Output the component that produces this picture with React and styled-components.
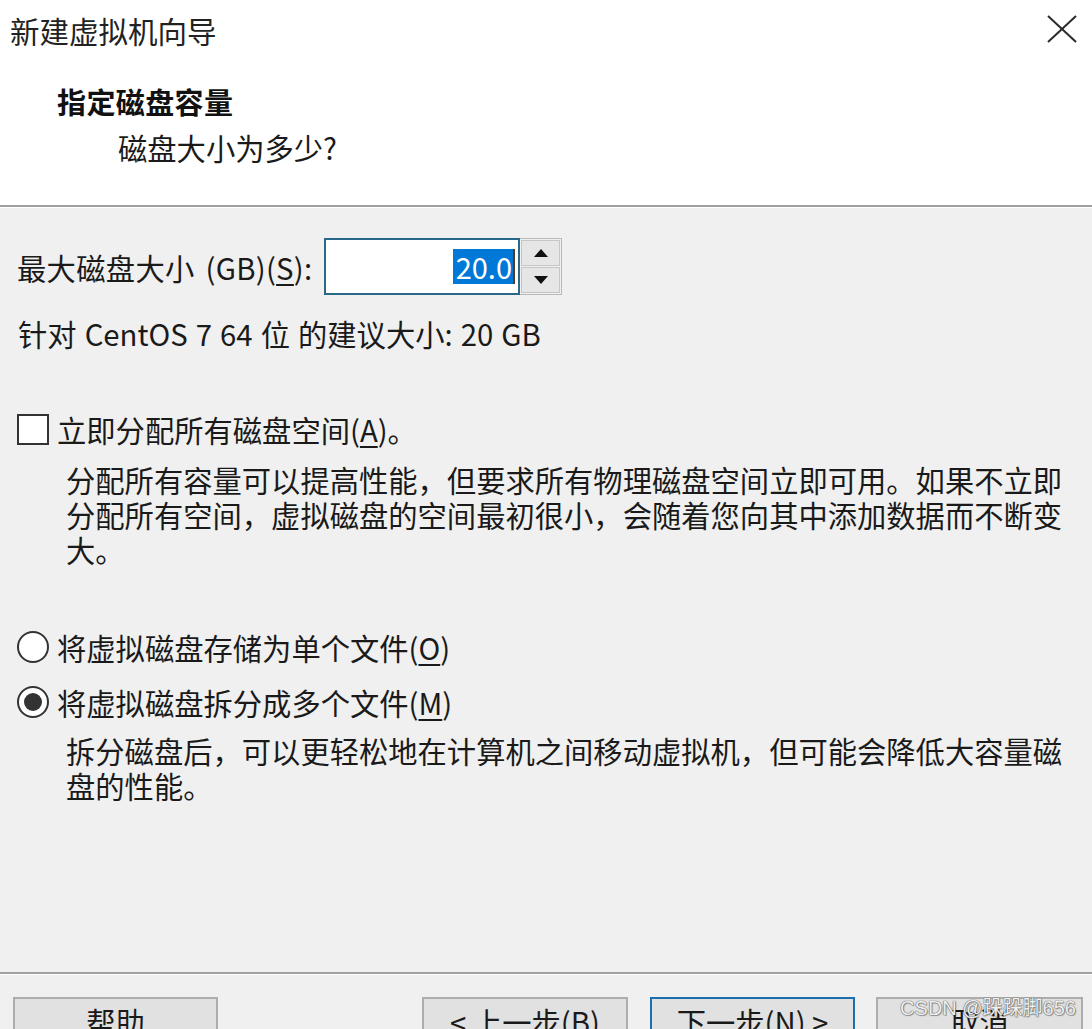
import React from "react";
import styled, { createGlobalStyle } from "styled-components";

const GlobalStyle = createGlobalStyle`
  html, body {
    margin: 0;
    padding: 0;
    background: #f0f0f0;
    overflow: hidden;
  }
  body {
    font-family: "Noto Sans CJK SC", "Noto Sans", sans-serif;
    color: #1a1a1a;
  }
  * { box-sizing: border-box; }
`;

const Window = styled.div`
  position: relative;
  width: 1092px;
  height: 1029px;
  overflow: hidden;
  display: flex;
  flex-direction: column;
  background: #f0f0f0;
  font-size: 29.3px;
`;

const Header = styled.header`
  flex-shrink: 0;
  height: 205px;
  background: #ffffff;
  display: flex;
  flex-direction: column;
`;

const TitleBar = styled.div`
  height: 60px;
  display: flex;
  align-items: center;
  justify-content: space-between;
  padding: 0 15px 0 10px;
`;

const WindowTitle = styled.div`
  font-size: 29.5px;
  line-height: 40px;
  color: #222;
`;

const CloseButton = styled.button`
  border: none;
  background: transparent;
  padding: 0;
  width: 30px;
  height: 28px;
  display: flex;
  align-items: center;
  justify-content: center;
  margin-top: -2px;
`;

const PageTitle = styled.div`
  margin-top: 21px;
  padding-left: 57px;
  font-weight: 700;
  font-size: 29px;
  letter-spacing: 0.4px;
  line-height: 40px;
  color: #111;
`;

const PageSubtitle = styled.div`
  margin-top: 6px;
  padding-left: 118px;
  line-height: 40px;
`;

const Separator = styled.div`
  flex-shrink: 0;
  height: 3px;
  border-top: 2px solid #a0a0a0;
  background: #ffffff;
`;

const Body = styled.main`
  flex-shrink: 0;
  height: 764px;
  padding: 30px 0 0 17px;
  display: flex;
  flex-direction: column;
`;

const FieldRow = styled.div`
  display: flex;
  align-items: center;
  height: 57px;
`;

const FieldLabel = styled.label`
  min-width: 307px;
  line-height: 40px;
  white-space: nowrap;
  word-spacing: 4px;
  letter-spacing: 0.3px;
`;

const Key = styled.span`
  text-decoration: underline;
  text-underline-offset: 4px;
  text-decoration-thickness: 2px;
`;

const SpinBox = styled.div`
  display: flex;
  height: 57px;
`;

const SpinInput = styled.div`
  width: 196px;
  height: 57px;
  background: #ffffff;
  border: 2px solid #2a688a;
  display: flex;
  align-items: center;
  justify-content: flex-end;
  padding-right: 3px;
`;

const Selection = styled.span`
  background: #0078d7;
  color: #ffffff;
  line-height: 35px;
  height: 35px;
  padding: 0 1px 0 3px;
  font-size: 29px;
  border-right: 2px solid #5a3a1a;
  display: inline-flex;
  align-items: center;
`;

const SpinButtons = styled.div`
  width: 42px;
  height: 57px;
  border: 1px solid #b9b9b9;
  border-left: none;
  background: #f0f0f0;
  padding: 1px;
  display: flex;
  flex-direction: column;
  gap: 1px;
`;

const SpinArrow = styled.div`
  flex: 1;
  background: #e6e6e6;
  border: 1px solid #c6c6c6;
  display: flex;
  align-items: center;
  justify-content: center;
`;

const InfoLine = styled.div`
  margin-top: 18px;
  padding-left: 1px;
  line-height: 40px;
  white-space: nowrap;
  word-spacing: 1.5px;
`;

const OptionRow = styled.label`
  display: flex;
  align-items: center;
  gap: 8px;
  height: 40px;
  margin-top: ${(p) => p.$top}px;
  white-space: nowrap;
`;

const CheckBox = styled.span`
  width: 32px;
  height: 31px;
  border: 2px solid #333333;
  background: #ffffff;
  flex-shrink: 0;
`;

const Radio = styled.span`
  width: 32px;
  height: 32px;
  border-radius: 50%;
  border: 2px solid #333333;
  background: #ffffff;
  flex-shrink: 0;
  display: flex;
  align-items: center;
  justify-content: center;
  &::after {
    content: "";
    width: 18px;
    height: 18px;
    border-radius: 50%;
    background: ${(p) => (p.$checked ? "#333333" : "transparent")};
  }
`;

const Description = styled.p`
  margin: ${(p) => p.$top}px 0 0 49px;
  width: 1010px;
  line-height: 35px;
`;

const Footer = styled.footer`
  flex-shrink: 0;
  display: flex;
  align-items: flex-start;
  padding: 22px 9px 0 13px;
`;

const Button = styled.button`
  width: ${(p) => p.$w || 206}px;
  height: 48px;
  margin-left: ${(p) => p.$gap || 0}px;
  background: #e1e1e1;
  border: 2px solid ${(p) => (p.$primary ? "#1a6fb0" : "#adadad")};
  font-family: inherit;
  font-size: 29.3px;
  line-height: 40px;
  color: #1a1a1a;
  padding: 0;
  flex-shrink: 0;
`;

const Spacer = styled.div`
  flex: 1;
`;

const Watermark = styled.div`
  position: absolute;
  right: 16px;
  top: 996px;
  font-family: "Liberation Sans", "Noto Sans CJK SC", sans-serif;
  font-size: 20px;
  line-height: 24px;
  color: rgba(255, 255, 255, 0.92);
  text-shadow: 0 0 1px #555, 0 0 1px #555, 1px 1px 1px rgba(0, 0, 0, 0.3);
  pointer-events: none;
`;

const UpArrow = () => (
  <svg width="14" height="8" viewBox="0 0 14 8">
    <polygon points="7,0 14,8 0,8" fill="#111" />
  </svg>
);

const DownArrow = () => (
  <svg width="14" height="8" viewBox="0 0 14 8">
    <polygon points="0,0 14,0 7,8" fill="#111" />
  </svg>
);

const CloseIcon = () => (
  <svg width="30" height="28" viewBox="0 0 30 28">
    <line x1="1" y1="1" x2="29" y2="27" stroke="#2a2a2a" strokeWidth="2" />
    <line x1="29" y1="1" x2="1" y2="27" stroke="#2a2a2a" strokeWidth="2" />
  </svg>
);

export default function App() {
  return (
    <>
      <GlobalStyle />
      <Window>
        <Header>
          <TitleBar>
            <WindowTitle>新建虚拟机向导</WindowTitle>
            <CloseButton aria-label="关闭">
              <CloseIcon />
            </CloseButton>
          </TitleBar>
          <PageTitle>指定磁盘容量</PageTitle>
          <PageSubtitle>磁盘大小为多少?</PageSubtitle>
        </Header>
        <Separator />
        <Body>
          <FieldRow>
            <FieldLabel>
              最大磁盘大小 (GB)(<Key>S</Key>):
            </FieldLabel>
            <SpinBox>
              <SpinInput>
                <Selection>20.0</Selection>
              </SpinInput>
              <SpinButtons>
                <SpinArrow>
                  <UpArrow />
                </SpinArrow>
                <SpinArrow>
                  <DownArrow />
                </SpinArrow>
              </SpinButtons>
            </SpinBox>
          </FieldRow>
          <InfoLine>针对 CentOS 7 64 位 的建议大小: 20 GB</InfoLine>

          <OptionRow $top={56}>
            <CheckBox />
            <span>
              立即分配所有磁盘空间(<Key>A</Key>)。
            </span>
          </OptionRow>
          <Description $top={13}>
            分配所有容量可以提高性能，但要求所有物理磁盘空间立即可用。如果不立即分配所有空间，虚拟磁盘的空间最初很小，会随着您向其中添加数据而不断变大。
          </Description>

          <OptionRow $top={60}>
            <Radio />
            <span>
              将虚拟磁盘存储为单个文件(<Key>O</Key>)
            </span>
          </OptionRow>
          <OptionRow $top={15}>
            <Radio $checked />
            <span>
              将虚拟磁盘拆分成多个文件(<Key>M</Key>)
            </span>
          </OptionRow>
          <Description $top={11}>
            拆分磁盘后，可以更轻松地在计算机之间移动虚拟机，但可能会降低大容量磁盘的性能。
          </Description>
        </Body>
        <Separator />
        <Footer>
          <Button $w={205}>帮助</Button>
          <Spacer />
          <Button>
            &lt; 上一步(<Key>B</Key>)
          </Button>
          <Button $primary $gap={22} $w={205}>
            下一步(<Key>N</Key>) &gt;
          </Button>
          <Button $gap={21} $w={207}>
            取消
          </Button>
        </Footer>
        <Watermark>CSDN @跺跺脚656</Watermark>
      </Window>
    </>
  );
}
